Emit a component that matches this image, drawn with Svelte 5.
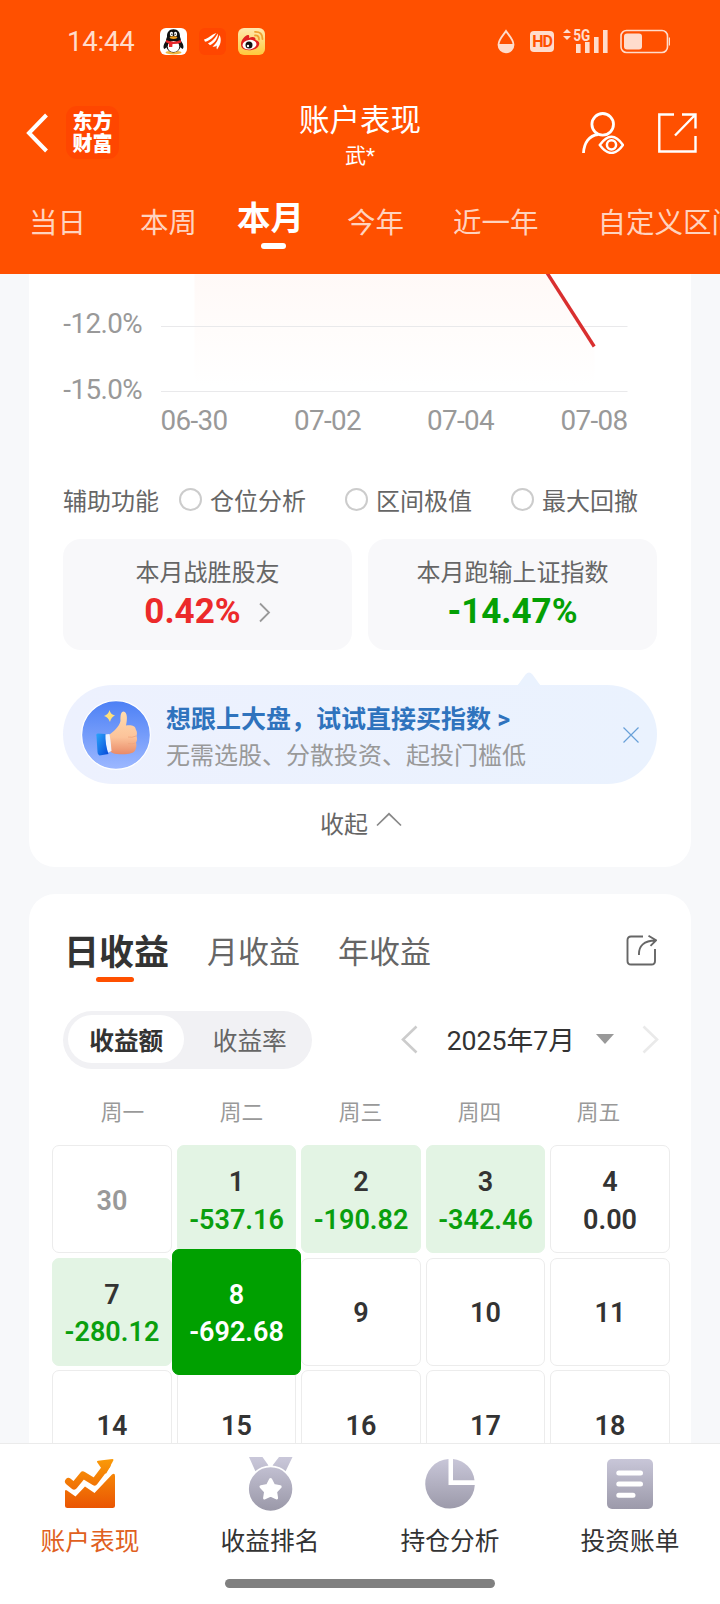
<script>
  const ranges = ['当日', '本周', '本月', '今年', '近一年', '自定义区间'];
  const helpers = ['仓位分析', '区间极值', '最大回撤'];
  const periods = ['日收益', '月收益', '年收益'];
  const weekdays = ['周一', '周二', '周三', '周四', '周五'];
  const navs = ['账户表现', '收益排名', '持仓分析', '投资账单'];

  const yLabels = [
    { text: '-12.0%', y: 52 },
    { text: '-15.0%', y: 117.5 }
  ];
  const xLabels = [
    { text: '06-30', x: 165 },
    { text: '07-02', x: 298.5 },
    { text: '07-04', x: 431.5 },
    { text: '07-08', x: 565 }
  ];

  const days = [
    { day: 30, muted: true },
    { day: 1, value: '-537.16' },
    { day: 2, value: '-190.82' },
    { day: 3, value: '-342.46' },
    { day: 4, value: '0.00' },
    { day: 7, value: '-280.12' },
    { day: 8, value: '-692.68' },
    { day: 9 },
    { day: 10 },
    { day: 11 },
    { day: 14 },
    { day: 15 },
    { day: 16 },
    { day: 17 },
    { day: 18 }
  ];

  let range = 2;
  let helper = -1;
  let period = 0;
  let mode = 0;
  let selected = 8;
  let nav = 0;
  let showTip = true;

  function isLoss(d) {
    return d.value && d.value.startsWith('-');
  }
</script>

<div class="app">
  <header>
    <div class="status">
      <span class="time">14:44</span>
      <div class="notices">
        <svg width="27" height="27" viewBox="0 0 27 27">
          <rect width="27" height="27" rx="6" fill="#fff" />
          <ellipse cx="13.5" cy="24.6" rx="8" ry="1.8" fill="#f0b840" />
          <path d="M6 13 C3 17 3 20 4.5 21 L7 19 M21 13 C24 17 24 20 22.5 21 L20 19" fill="#111" />
          <path d="M13.5 1.3 C9 1.3 6.8 4.5 7 9 C5 13 4.8 24 13.5 24.5 C22.2 24 22 13 20 9 C20.2 4.5 18 1.3 13.5 1.3Z" fill="#111" />
          <ellipse cx="13.5" cy="18.5" rx="5.8" ry="5.6" fill="#fff" />
          <ellipse cx="11.5" cy="6" rx="1.6" ry="2.2" fill="#fff" />
          <ellipse cx="15.5" cy="6" rx="1.6" ry="2.2" fill="#fff" />
          <circle cx="11.9" cy="6.2" r=".7" fill="#111" />
          <circle cx="15.1" cy="6.2" r=".7" fill="#111" />
          <ellipse cx="13.5" cy="9.6" rx="3.8" ry="1.3" fill="#f0a020" />
          <path d="M6.3 12 Q13.5 15.5 20.7 12 L21.2 14.5 Q17 16.3 12.5 16 L12.3 19 H9 V15.5 L5.8 14.3Z" fill="#e8262a" />
        </svg>
        <svg width="27" height="27" viewBox="0 0 27 27">
          <rect width="27" height="27" rx="6" fill="#ff4600" />
          <path d="M5 11.5 C9.5 10.5 12 6.500 17.500 5 C14.500 8.500 12 12.500 6 13.800Z M9 15.300 C14 13.500 16.500 9 19 5.500 C19 10 16 15 11 17.300Z M13.500 18.700 C17.500 15.500 19.500 11 20.500 7 C23 12 21.500 17 18 21.500 Q17.300 19.500 17.800 17.500 Q16.500 19 13.500 18.700Z" fill="#fff" />
        </svg>
        <svg width="27" height="27" viewBox="0 0 27 27">
          <defs>
            <linearGradient id="wb" x1="0" y1="0" x2="0" y2="1">
              <stop offset="0" stop-color="#ffe9b0" />
              <stop offset="1" stop-color="#ffc93c" />
            </linearGradient>
          </defs>
          <rect width="27" height="27" rx="6" fill="url(#wb)" />
          <path d="M3 16 C3 12 7 7.5 10 7 C11.8 7 11.2 9 11 10 C14 8.5 18 8.5 17.5 12 C20 12.7 22 14 21 17 C19 23 7 24 3.8 19.5 Q3 18 3 16Z" fill="#e02020" />
          <ellipse cx="11.5" cy="16.7" rx="7" ry="4.8" fill="#fff" transform="rotate(-8 11.5 16.7)" />
          <circle cx="11" cy="17" r="3.5" fill="#111" />
          <circle cx="10" cy="18" r="1.2" fill="#fff" />
          <path d="M17 7.5 Q21 7 21 11.5 M17 3.8 Q24.5 3.5 24.5 11" fill="none" stroke="#f0a030" stroke-width="1.8" stroke-linecap="round" />
        </svg>
      </div>
      <div class="signals">
        <svg width="18" height="25" viewBox="0 0 18 25">
          <path d="M9 2 C6.5 6 1.5 10.5 1.5 15.8 A7.5 7.5 0 0 0 16.5 15.8 C16.5 10.5 11.5 6 9 2Z" fill="none" stroke="currentColor" stroke-width="1.8" />
          <path d="M1.5 15 H16.5 C17 26 1 26 1.5 15Z" fill="currentColor" />
        </svg>
        <span class="hd">HD</span>
        <svg class="bars" width="45" height="26" viewBox="0 0 45 26">
          <path d="M4 1 L8 5 H0Z M4 12 L8 8 H0Z" fill="currentColor" />
          <text x="10.2" y="12.5" font-size="16" font-weight="700" textLength="17" lengthAdjust="spacingAndGlyphs" fill="currentColor">5G</text>
          <path d="M13 16 h4.6 v9 h-4.6z M22 14 h4.6 v11 h-4.6z M31 9 h4.6 v16 h-4.6z M40 2 h4.6 v23 h-4.6z" fill="currentColor" />
        </svg>
        <svg width="51" height="25" viewBox="0 0 51 25">
          <rect x="1" y="1.5" width="46.5" height="22" rx="5.5" fill="none" stroke="currentColor" stroke-width="1.6" />
          <rect x="4" y="4.500" width="18" height="16" rx="3" fill="currentColor" />
          <path d="M48.8 8.5 h1.2 v8 h-1.2z" fill="currentColor" />
        </svg>
      </div>
    </div>

    <div class="titlebar">
      <div class="left">
        <svg width="22" height="40" viewBox="0 0 22 40">
          <path d="M20.500 2 L3 20 L20.500 38" fill="none" stroke="#fff" stroke-width="4" />
        </svg>
        <div class="logo">东方<br />财富</div>
      </div>
      <div class="title">
        <h1>账户表现</h1>
        <p>武*</p>
      </div>
      <div class="right">
        <svg width="42" height="42" viewBox="0 0 42 42" fill="none" stroke="#fff" stroke-width="2.8">
          <circle cx="20.7" cy="12.3" r="10.8" />
          <path d="M1.5 41 C2 31 7 23.5 16 22.5" />
          <path d="M17.8 33 Q29.5 16.5 41 33 Q29.5 49 17.8 33Z" stroke-width="2.4" />
          <circle cx="29.5" cy="32.8" r="4.6" stroke-width="2.5" />
        </svg>
        <svg width="39" height="40" viewBox="0 0 39 40" fill="none" stroke="#fff" stroke-width="2.400">
          <path d="M16 1.5 H1.3 V38.5 H37.5 V23" />
          <path d="M24 1.5 H37.5 V15.500 M37 2 L17 22.5" />
        </svg>
      </div>
    </div>

    <nav class="ranges">
      {#each ranges as r, i}
        <button class:active={range === i} on:click={() => (range = i)}>{r}</button>
      {/each}
    </nav>
  </header>

  <main>
    <section class="card performance">
      <svg class="chart" width="662" height="176" viewBox="0 0 662 176">
        <defs>
          <linearGradient id="area" x1="0" y1="0" x2="0" y2="1">
            <stop offset="0" stop-color="#fff9f7" />
            <stop offset="1" stop-color="#ffffff" />
          </linearGradient>
        </defs>
        <path d="M165.5 0 H518.5 L565.5 72 V112 H165.5Z" fill="url(#area)" />
        <path d="M132 52.5 H598.5 M132 117.5 H598.5" stroke="#e9e9eb" />
        <path d="M517.5 -2 L565.2 72.5" stroke="#d92f2f" stroke-width="3.4" />
        {#each yLabels as l}
          <text x="113" y={l.y + 7} text-anchor="end">{l.text}</text>
        {/each}
        {#each xLabels as l}
          <text x={l.x} y="156" text-anchor="middle">{l.text}</text>
        {/each}
      </svg>

      <div class="helpers">
        <span class="lead">辅助功能</span>
        {#each helpers as h, i}
          <button on:click={() => (helper = i)}>
            <i class:on={helper === i}></i>{h}
          </button>
        {/each}
      </div>

      <div class="stats">
        <div class="stat">
          <p>本月战胜股友</p>
          <strong class="up">
            0.42%
            <svg width="12" height="21" viewBox="0 0 12 21">
              <path d="M1 1.5 L10 10.5 L1 19.5" fill="none" stroke="#999" stroke-width="1.8" />
            </svg>
          </strong>
        </div>
        <div class="stat">
          <p>本月跑输上证指数</p>
          <strong class="down">-14.47%</strong>
        </div>
      </div>

      {#if showTip}
        <div class="tip">
          <svg class="beak" width="26" height="14" viewBox="0 0 26 14">
            <path d="M0 14 Q2 13 3 11.5 L9.5 2.5 Q13 -1.5 16.5 2.5 L23 11.5 Q24 13 26 14Z" fill="#eaf2fe" />
          </svg>
          <svg class="thumb" width="70" height="70" viewBox="0 0 70 70">
            <defs>
              <linearGradient id="disc" x1="0" y1="0" x2="0" y2="1">
                <stop offset="0" stop-color="#4c80f5" />
                <stop offset="1" stop-color="#9db8ff" />
              </linearGradient>
              <linearGradient id="skin" x1="0" y1="0" x2="0" y2="1">
                <stop offset="0" stop-color="#ffdcae" />
                <stop offset=".6" stop-color="#fcc39a" />
                <stop offset="1" stop-color="#e98a68" />
              </linearGradient>
              <linearGradient id="cuff" x1="0" y1="0" x2="1" y2="1">
                <stop offset="0" stop-color="#2aa5fb" />
                <stop offset="1" stop-color="#0648d8" />
              </linearGradient>
            </defs>
            <circle cx="35" cy="35" r="34.4" fill="url(#disc)" stroke="#fff" stroke-width="1.2" />
            <path d="M28.5 10 Q29.5 14.5 34 15.5 Q30 17 29 22 Q27 17 23 16 Q27.5 14.5 28.5 10Z" fill="#ffe07a" />
            <path d="M28 35 C33 31 38 27 39.5 21 C39.3 15 40 11.5 42.5 11.5 C46.5 12 46.5 19 45 25.5 C50 24.8 54.5 25.5 54.8 29.5 C56.5 32 56 34.5 55.5 36 C56.5 39 56 41 55 42.5 C56 46 55 48 54.5 49.5 C53 55 42 54.5 36 54 Q31 54 28 50Z" fill="url(#skin)" />
            <path d="M55 36 Q51 38 47 37 M54.5 43 Q51 44.5 47 43.5" fill="none" stroke="#f0a47c" stroke-width=".8" />
            <path d="M23.5 34.5 L28.5 34 Q30 42 30.5 51 L26 53Z" fill="#eef3ff" />
            <path d="M15.5 36 Q14.5 34 17 33.5 L24.5 34 Q24 44 27.5 54 L18.5 55.5 Q16.5 55 16.5 52Z" fill="url(#cuff)" />
          </svg>
          <div class="tip-text">
            <b>想跟上大盘，试试直接买指数 &gt;</b>
            <span>无需选股、分散投资、起投门槛低</span>
          </div>
          <button class="close" aria-label="关闭" on:click={() => (showTip = false)}>
            <svg width="18" height="18" viewBox="0 0 18 18">
              <path d="M1.5 1.5 L16.5 16.5 M16.5 1.5 L1.5 16.5" stroke="#68a0d8" stroke-width="1.2" />
            </svg>
          </button>
        </div>
      {/if}

      <div class="collapse">
        收起
        <svg width="26" height="15" viewBox="0 0 26 15">
          <path d="M1 13.5 L13 1.8 L25 13.5" fill="none" stroke="#888" stroke-width="1.7" />
        </svg>
      </div>
    </section>

    <section class="card income">
      <div class="periods">
        {#each periods as p, i}
          <button class:active={period === i} on:click={() => (period = i)}>{p}</button>
        {/each}
        <svg width="31" height="31" viewBox="0 0 31 31" fill="none" stroke="#666" stroke-width="1.9">
          <path d="M17 1.5 H5 Q1.5 1.5 1.5 5 V26 Q1.5 29.5 5 29.5 H25.5 Q29 29.5 29 26 V14" />
          <path d="M13 20 C12.5 11 18 5.5 29.5 5.5 M22.5 .8 L30 5.3 L24.5 10.8" />
        </svg>
      </div>

      <div class="toolbar">
        <div class="switch">
          <button class:active={mode === 0} on:click={() => (mode = 0)}>收益额</button>
          <button class:active={mode === 1} on:click={() => (mode = 1)}>收益率</button>
        </div>
        <div class="month">
          <svg width="17" height="29" viewBox="0 0 17 29">
            <path d="M15.5 1.5 L2 14.5 L15.5 27.5" fill="none" stroke="#ccc" stroke-width="2.6" />
          </svg>
          <span>2025年7月</span>
          <i class="caret"></i>
          <svg width="17" height="29" viewBox="0 0 17 29">
            <path d="M1.5 1.5 L15 14.5 L1.5 27.5" fill="none" stroke="#eaeaea" stroke-width="2.6" />
          </svg>
        </div>
      </div>

      <div class="weekdays">
        {#each weekdays as w}
          <span>{w}</span>
        {/each}
      </div>

      <div class="calendar">
        {#each days as d}
          <button
            class="cell"
            class:muted={d.muted}
            class:loss={isLoss(d)}
            class:selected={selected === d.day}
            on:click={() => (selected = d.day)}
          >
            <span>{d.day}</span>
            {#if d.value}
              <span class="value">{d.value}</span>
            {/if}
          </button>
        {/each}
      </div>
    </section>
  </main>

  <footer>
    <div class="navs">
      {#each navs as n, i}
        <button class:active={nav === i} on:click={() => (nav = i)}>
          <svg width="54" height="56" viewBox="0 0 54 56">
            <defs>
              <linearGradient id="hot" gradientUnits="userSpaceOnUse" x1="0" y1="3" x2="0" y2="52">
                <stop offset="0" stop-color="#fa9a08" />
                <stop offset="1" stop-color="#ea5503" />
              </linearGradient>
              <linearGradient id="cool" gradientUnits="userSpaceOnUse" x1="0" y1="2" x2="0" y2="54">
                <stop offset="0" stop-color="#c9c7d9" />
                <stop offset="1" stop-color="#9b99a9" />
              </linearGradient>
            </defs>
            {#if i === 0}
              <path d="M5.5 25.5 L11 30 L20 19 L31.5 26 L44 9.5" fill="none" stroke="url(#hot)" stroke-width="7" stroke-linejoin="round" stroke-linecap="round" />
              <path d="M34 6 Q33.5 5 35 4.7 L49.5 3 Q51 3 50.3 4.5 L43.5 17 Q42.5 18 41.5 17Z" fill="url(#hot)" />
              <path d="M2 35 Q2.5 33.5 4 34.5 L12.5 40.5 L22 30.5 L31.5 37 L49 18.5 Q52 16.5 52 20 V49.5 Q52 52 49.5 52 H4.5 Q2 52 2 49.5Z" fill="url(#hot)" />
            {:else if i === 1}
              <path d="M6 1 H19.500 L25.500 9.5 L12.500 15.5Z M49.500 1 H36 L29.500 9.5 L42.500 15.5Z" fill="url(#cool)" />
              <circle cx="27.600" cy="33" r="22.600" fill="url(#cool)" stroke="#fff" stroke-width="1.800" />
              <path d="M27.600 23.500 L30.800 29.600 L37.200 30.700 L32.600 35.700 L33.600 42 L27.600 39.200 L21.600 42 L22.600 35.700 L18 30.700 L24.400 29.600Z" fill="#fff" stroke="#fff" stroke-width="3" stroke-linejoin="round" />
            {:else if i === 2}
              <path d="M25.5 3 A24.8 24.8 0 1 0 51.8 29 H25.5Z" fill="url(#cool)" />
              <path d="M30 3 A24 24 0 0 1 51.5 24.3 H30Z" fill="url(#cool)" />
            {:else}
              <rect x="4" y="3" width="46" height="50" rx="5" fill="url(#cool)" />
              <path d="M15.8 17 H37.5 M15.8 28 H37.5 M15.8 39.3 H30" stroke="#fff" stroke-width="5" stroke-linecap="round" />
            {/if}
          </svg>
          <span>{n}</span>
        </button>
      {/each}
    </div>
    <div class="home"></div>
  </footer>
</div>

<style>
  :global(body) {
    margin: 0;
    background: #f7f8fa;
  }

  * {
    box-sizing: border-box;
  }

  .app {
    width: 720px;
    height: 1604px;
    display: flex;
    flex-direction: column;
    overflow: hidden;
    background: #f7f8fa;
    color: #333;
    font-family: Roboto, "Noto Sans CJK SC", sans-serif;
  }

  button {
    border: 0;
    padding: 0;
    background: none;
    color: inherit;
    font: inherit;
    white-space: nowrap;
  }

  svg {
    display: block;
    flex: none;
  }

  p, h1 {
    margin: 0;
  }

  header {
    flex: none;
    height: 274px;
    background: #ff5000;
    color: #fff;
  }

  .status {
    height: 82px;
    padding: 0 49px 0 67px;
    display: flex;
    align-items: center;
    color: #ffdccc;
  }
  .time {
    width: 93px;
    font-size: 27.5px;
    letter-spacing: -0.2px;
  }
  .notices {
    display: flex;
    gap: 12px;
  }
  .signals {
    margin-left: auto;
    display: flex;
    align-items: center;
  }
  .hd {
    width: 24px;
    height: 21px;
    margin: 1px 9px 0 15px;
    border-radius: 4px;
    background: #ffdccc;
    color: #ff5000;
    font-size: 16px;
    font-weight: 700;
    line-height: 22px;
    text-align: center;
    letter-spacing: -1px;
  }
  .bars {
    margin-right: 12px;
  }

  .titlebar {
    height: 98px;
    padding: 0 23px 0 26px;
    display: grid;
    grid-template-columns: 1fr auto 1fr;
    align-items: center;
  }
  .left, .right {
    display: flex;
    align-items: center;
    padding-top: 3px;
  }
  .left {
    gap: 18px;
  }
  .right {
    justify-content: flex-end;
    gap: 34px;
  }
  .logo {
    width: 53px;
    height: 53px;
    padding-top: 5px;
    border-radius: 11px;
    background: #ff4600;
    font-size: 20px;
    font-weight: 900;
    line-height: 22px;
    text-align: center;
  }
  .title {
    margin-right: 3px;
    padding-top: 9px;
    text-align: center;
  }
  .title h1 {
    font-size: 30.5px;
    font-weight: 400;
    line-height: 40px;
  }
  .title p {
    font-size: 21px;
    line-height: 30px;
  }

  .ranges {
    display: flex;
    height: 86px;
    color: #ffd3bf;
    font-size: 28.5px;
    line-height: 86px;
  }
  .ranges button {
    flex: none;
    height: 88px;
    line-height: 88px;
    margin-left: 50px;
  }
  .ranges button:nth-child(1) { margin-left: 29px; }
  .ranges button:nth-child(2) { margin-left: 54px; }
  .ranges button:nth-child(3) { margin-left: 40px; }
  .ranges button:nth-child(4) { margin-left: 43px; }
  .ranges button:nth-child(5) { margin-left: 49px; }
  .ranges button:nth-child(6) { margin-left: 59px; }
  .ranges .active {
    position: relative;
    color: #fff;
    font-size: 33.5px;
    font-weight: 700;
    line-height: 76px;
    height: 77px;
  }
  .ranges .active::after {
    content: "";
    position: absolute;
    left: 50%;
    bottom: 8px;
    width: 25px;
    height: 6px;
    margin-left: -10px;
    border-radius: 3px;
    background: #fff;
  }

  main {
    flex: 1;
    min-height: 0;
    overflow: hidden;
    padding: 0 29px;
  }

  .card {
    background: #fff;
  }

  .performance {
    height: 593px;
    border-radius: 0 0 26px 26px;
  }
  .chart text {
    font-size: 27.8px;
    letter-spacing: -0.6px;
    fill: #999;
  }

  .helpers {
    height: 50px;
    margin-top: 24px;
    padding-left: 34px;
    display: flex;
    align-items: center;
    color: #666;
    font-size: 24px;
  }
  .lead {
    width: 116px;
  }
  .helpers button {
    width: 166px;
    display: flex;
    align-items: center;
  }
  .helpers i {
    width: 23px;
    height: 23px;
    margin-right: 8px;
    border: 2px solid #ccc;
    border-radius: 50%;
  }
  .helpers i.on {
    border-color: #ff5000;
  }

  .stats {
    display: grid;
    grid-template-columns: 1fr 1fr;
    gap: 16px;
    margin: 15px 34px 0;
  }
  .stat {
    height: 111px;
    padding-top: 16px;
    border-radius: 18px;
    background: #f8f8fa;
    text-align: center;
  }
  .stat p {
    color: #666;
    font-size: 24px;
    line-height: 36px;
  }
  .stat strong {
    display: flex;
    justify-content: center;
    align-items: center;
    gap: 18px;
    font-size: 35px;
    line-height: 42px;
  }
  .up {
    color: #ec2a2a;
  }
  .down {
    color: #04a004;
  }

  .tip {
    position: relative;
    height: 99px;
    margin: 35px 34px 0;
    padding: 0 17px 0 18px;
    display: flex;
    align-items: center;
    border-radius: 50px;
    background: linear-gradient(90deg, #edf1fe, #eaf2fe);
  }
  .beak {
    position: absolute;
    top: -13px;
    left: 453px;
  }
  .tip-text {
    flex: 1;
    margin-left: 15px;
    padding-top: 6px;
  }
  .tip-text b, .tip-text span {
    display: block;
    line-height: 37px;
  }
  .tip-text b {
    color: #2f73bd;
    font-size: 25px;
  }
  .tip-text span {
    color: #999;
    font-size: 24px;
  }

  .collapse {
    display: flex;
    justify-content: center;
    align-items: center;
    gap: 8px;
    margin-top: 18px;
    padding-left: 2px;
    height: 40px;
    color: #666;
    font-size: 24px;
  }
  .collapse svg {
    margin-top: -5px;
  }

  .income {
    margin-top: 27px;
    padding: 23px 21px 0 23px;
    border-radius: 26px 26px 0 0;
  }

  .periods {
    display: flex;
    align-items: center;
    height: 64px;
    padding: 0 13px 0 12px;
    color: #666;
    font-size: 31px;
  }
  .periods button {
    margin-right: 38px;
  }
  .periods .active {
    position: relative;
    color: #333;
    font-size: 35px;
    font-weight: 700;
  }
  .periods .active::after {
    content: "";
    position: absolute;
    left: 32px;
    bottom: -7px;
    width: 38px;
    height: 5px;
    border-radius: 3px;
    background: #ff5000;
  }
  .periods svg {
    margin: 2px 0 0 auto;
  }

  .toolbar {
    display: flex;
    justify-content: space-between;
    align-items: center;
    margin-top: 30px;
    padding: 0 11px;
  }
  .switch {
    display: flex;
    width: 249px;
    height: 58px;
    padding: 4px 5px 6px;
    border-radius: 29px;
    background: #f1f1f4;
    color: #666;
    font-size: 24.7px;
  }
  .switch button {
    width: 116px;
    height: 48px;
    padding-left: 1px;
    border-radius: 24px;
  }
  .switch button + button {
    margin-left: 8px;
  }
  .switch .active {
    background: #fff;
    color: #333;
    font-weight: 700;
  }
  .month {
    display: flex;
    align-items: center;
    font-size: 26.7px;
    margin-top: -2px;
  }
  .month span {
    margin: -2px 21px 0 29px;
    white-space: nowrap;
  }
  .caret {
    margin-right: 28px;
    border: 9px solid transparent;
    border-top: 10px solid #999;
    border-bottom: 0;
  }

  .weekdays {
    display: grid;
    grid-template-columns: repeat(5, 119px);
    margin-top: 28px;
    padding-left: 11px;
    color: #999;
    font-size: 21.7px;
    line-height: 32px;
    text-align: center;
  }

  .calendar {
    display: grid;
    grid-template-columns: repeat(5, 1fr);
    grid-auto-rows: 108px;
    gap: 4.6px;
    margin-top: 16px;
    font-size: 27px;
    font-weight: 600;
  }
  .cell {
    display: flex;
    flex-direction: column;
    justify-content: center;
    align-items: center;
    padding-top: 5px;
    line-height: 37.5px;
    border: 1px solid #ececec;
    border-radius: 7px;
    background: #fff;
  }
  .muted {
    color: #999;
  }
  .loss {
    border-color: #e3f4e4;
    background: #e3f4e4;
  }
  .loss .value {
    color: #0a9f0e;
  }
  .selected {
    z-index: 1;
    margin: -9px -4.5px;
    border-color: #00a000;
    background: #00a000;
    color: #fff;
  }
  .selected .value {
    color: #fff;
  }

  footer {
    flex: none;
    height: 161px;
    border-top: 1px solid #ebebeb;
    background: #fff;
  }
  .navs {
    display: grid;
    grid-template-columns: repeat(4, 1fr);
    padding-top: 12px;
    font-size: 24.7px;
  }
  .navs button {
    display: flex;
    flex-direction: column;
    align-items: center;
  }
  .navs span {
    margin-top: 12px;
    line-height: 36px;
  }
  .navs .active {
    color: #e06020;
  }
  .home {
    width: 270px;
    height: 9px;
    margin: 19px auto 0;
    border-radius: 5px;
    background: #808080;
  }
</style>
